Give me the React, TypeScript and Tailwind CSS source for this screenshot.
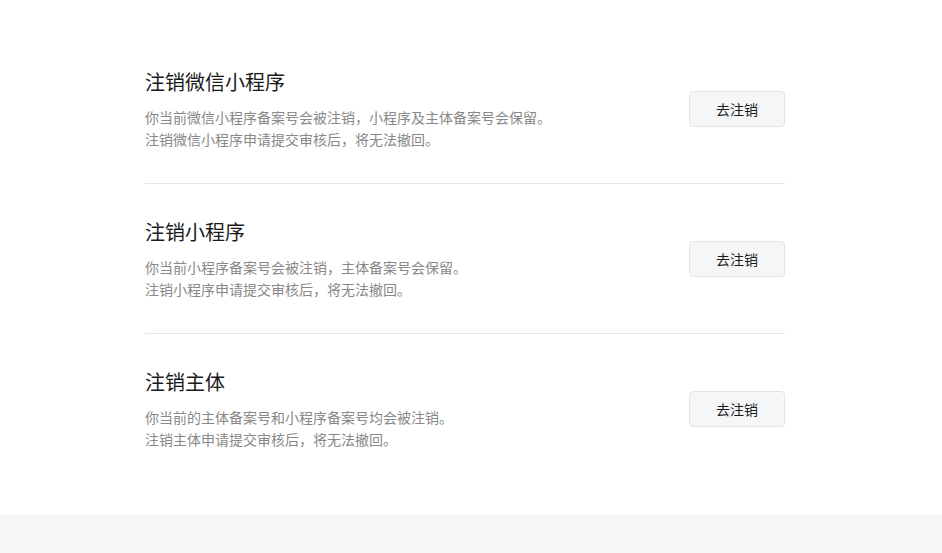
const items = [
  {
    title: "注销微信小程序",
    lines: ["你当前微信小程序备案号会被注销，小程序及主体备案号会保留。", "注销微信小程序申请提交审核后，将无法撤回。"],
  },
  {
    title: "注销小程序",
    lines: ["你当前小程序备案号会被注销，主体备案号会保留。", "注销小程序申请提交审核后，将无法撤回。"],
  },
  {
    title: "注销主体",
    lines: ["你当前的主体备案号和小程序备案号均会被注销。", "注销主体申请提交审核后，将无法撤回。"],
  },
];

const App = () => {
  return (
    <div className="min-h-[553px] bg-white font-['Noto_Sans_CJK_SC','Noto_Sans',sans-serif]">
      <div className="pt-[34px] pb-8 pl-[145px]">
        <div className="w-[640px]">
          {items.map((item, i) => (
            <div
              key={item.title}
              className={`flex items-center justify-between pt-[34px] pb-[33px] ${
                i < items.length - 1 ? "border-b border-[#e7e7e7]" : ""
              }`}
            >
              <div>
                <h3 className="text-[20px] leading-[28px] text-[#1a1a1a]">{item.title}</h3>
                <div className="mt-[10px] text-[14px] leading-[22px] text-[#888888]">
                  {item.lines.map((l) => (
                    <p key={l}>{l}</p>
                  ))}
                </div>
              </div>
              <button className="w-[96px] h-[36px] rounded-[4px] border border-[#e3e4e6] bg-[#f5f6f7] text-[14px] text-[#1a1a1a]">
                去注销
              </button>
            </div>
          ))}
        </div>
      </div>
      <div className="h-[38px] bg-[#f5f6f8]" />
    </div>
  );
};

export default App;
